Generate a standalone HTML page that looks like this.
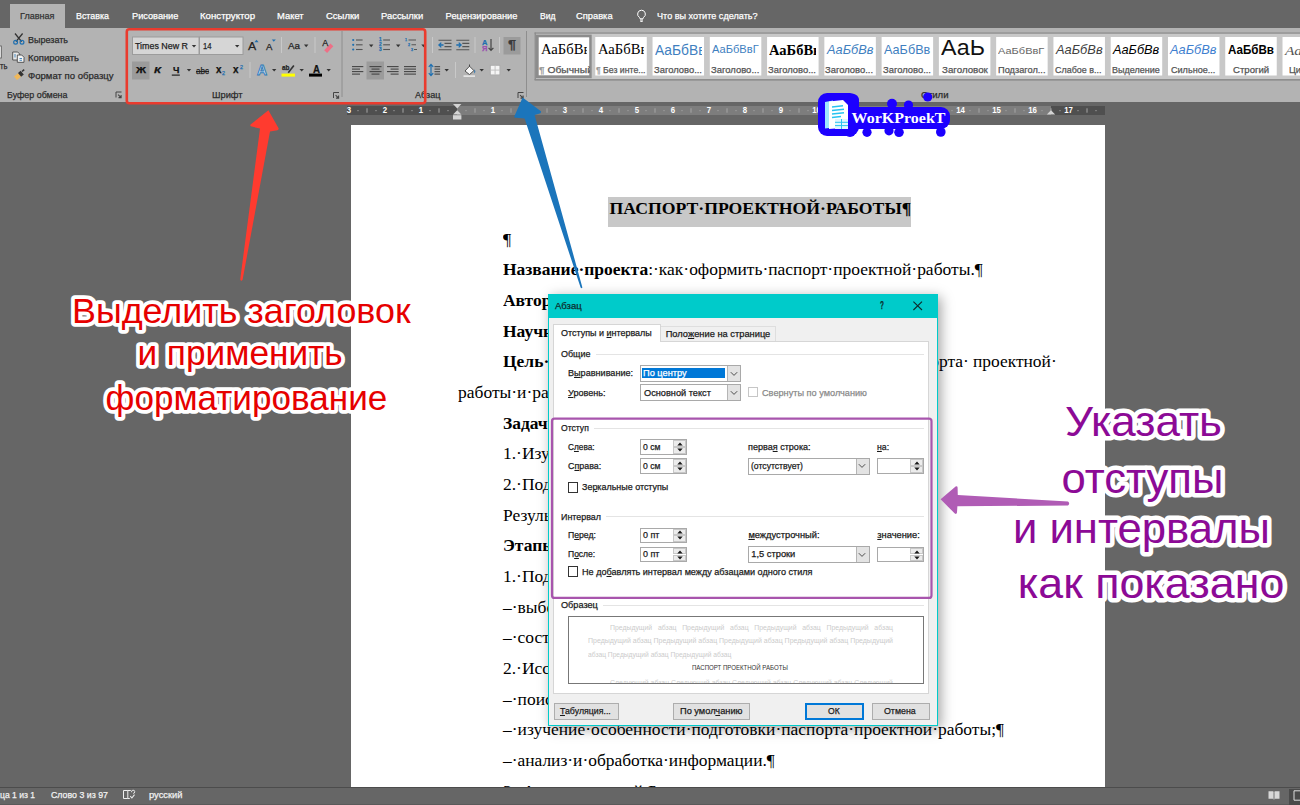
<!DOCTYPE html><html lang="ru"><head><meta charset="utf-8"><title>Абзац</title><style>
html,body{margin:0;padding:0}
body{width:1300px;height:805px;overflow:hidden;background:#666;position:relative}
.L{position:absolute;left:0;top:0;width:1300px;height:805px;overflow:hidden}
.L div,.L svg{position:absolute}
.t{position:absolute;white-space:pre;transform-origin:0 50%}
u{text-decoration:underline;text-underline-offset:1px}
#top .t,#dialog .t,#status .t{-webkit-text-stroke:0.25px currentColor}</style></head><body>
<div class="L" id="top" style="">
<div style="left:0px;top:0px;width:1300px;height:28px;background:#666666"></div>
<div style="left:10.3px;top:3.8px;width:54.9px;height:24.2px;background:#b3b3b3"></div>
<div style="left:0px;top:27.7px;width:1300px;height:74.1px;background:#b3b3b3"></div>
<svg style="left:635px;top:9px" width="13" height="14" viewBox="0 0 13 14"><path d="M6.5 1.2a3.9 3.9 0 0 0-2.2 7.1c.5.4.7.9.7 1.5h3c0-.6.2-1.1.7-1.5A3.9 3.9 0 0 0 6.5 1.2z" fill="none" stroke="#fff" stroke-width="1"/><path d="M5 11h3M5.3 12.4h2.4" stroke="#fff" stroke-width="1" fill="none"/></svg>
<svg style="left:0;top:0" width="1300" height="120" viewBox="0 0 1300 120"><rect x="-2" y="46" width="3.3" height="12" fill="#e8e8e8" stroke="#555" stroke-width="0.8"/><path d="M15 33.5l6.6 8.2M22.6 33.5l-6.6 8.2" stroke="#333" stroke-width="1.3" fill="none"/><circle cx="15.6" cy="42.3" r="1.9" fill="none" stroke="#1e6fb0" stroke-width="1.2"/><circle cx="22" cy="42.3" r="1.9" fill="none" stroke="#1e6fb0" stroke-width="1.2"/><path d="M12.7 52h5l2 2v6h-7z" fill="#e9e9e9" stroke="#4a4a4a" stroke-width="0.9"/><path d="M17.3 55h4.4l2.3 2.3v5h-6.7z" fill="#f4f4f4" stroke="#4a4a4a" stroke-width="0.9"/><path d="M15 54v3.5M19.5 58.5h2.5M19.5 60.3h2.5" stroke="#1e6fb0" stroke-width="0.8"/><path d="M14 76.5l4-3.3 3 3.6-4 3.2z" fill="#f0b85a"/><path d="M18 73l2.6-2.2 3.2 3.8-2.7 2.2z" fill="#333"/><path d="M22 71.5l2.2-1.8" stroke="#333" stroke-width="1.6"/><path d="M116 97.5v-5.5h5.5" fill="none" stroke="#444" stroke-width="1"/><path d="M118.1 94.6l3 3m0-2.6v2.6h-2.6" fill="none" stroke="#444" stroke-width="1.1"/><rect x="132.5" y="37" width="66.5" height="17.5" fill="#d6d6d6" stroke="#9c9c9c" stroke-width="1"/><rect x="199.5" y="37" width="43.5" height="17.5" fill="#d6d6d6" stroke="#9c9c9c" stroke-width="1"/><path d="M191.8 45h4.4l-2.2 2.6z" fill="#333"/><path d="M235 45h4.4l-2.2 2.6z" fill="#333"/><rect x="132" y="61.5" width="17.5" height="18" fill="#9b9b9b"/><path d="M186.8 69h4.4l-2.2 2.6z" fill="#333"/><path d="M171.8 75.1h8" stroke="#111" stroke-width="1.1"/><path d="M254.4 42.2h4.2l-2.1-2.4z" fill="#1e6fb0"/><path d="M271.8 39.4h4l-2 2.3z" fill="#1e6fb0"/><path d="M281.5 37V53" stroke="#c9c9c9" stroke-width="1"/><path d="M304 44.6h4.4l-2.2 2.6z" fill="#333"/><path d="M315 37V53" stroke="#c9c9c9" stroke-width="1"/><path d="M324.2 50.2l6.2-6.6 2.9 2.7-6.2 6.6z" fill="#ee6f86"/><path d="M250 62V78" stroke="#c9c9c9" stroke-width="1"/><path d="M272 69h4.4l-2.2 2.6z" fill="#333"/><path d="M287.6 72.2l5.6-7.2 1.3 1-5.6 7.2z" fill="#333"/><rect x="281.5" y="73.6" width="13.5" height="3" fill="#ffff00"/><path d="M299.5 69h4.4l-2.2 2.6z" fill="#333"/><rect x="309" y="73.6" width="13" height="3" fill="#000"/><path d="M326.5 69h4.4l-2.2 2.6z" fill="#333"/><path d="M333.5 98v-5.5h5.5" fill="none" stroke="#444" stroke-width="1"/><path d="M335.6 95.1l3 3m0-2.6v2.6h-2.6" fill="none" stroke="#444" stroke-width="1.1"/><path d="M342 31V97" stroke="#8e8e8e" stroke-width="1"/><circle cx="353.2" cy="40" r="1.1" fill="#1e6fb0"/><path d="M356 40h6.6" stroke="#555" stroke-width="1.1"/><path d="M383.2 40h6.8" stroke="#555" stroke-width="1.1"/><circle cx="353.2" cy="44.8" r="1.1" fill="#1e6fb0"/><path d="M356 44.8h6.6" stroke="#555" stroke-width="1.1"/><path d="M383.2 44.8h6.8" stroke="#555" stroke-width="1.1"/><circle cx="353.2" cy="49.5" r="1.1" fill="#1e6fb0"/><path d="M356 49.5h6.6" stroke="#555" stroke-width="1.1"/><path d="M383.2 49.5h6.8" stroke="#555" stroke-width="1.1"/><path d="M369 44.6h4.4l-2.2 2.6z" fill="#333"/><path d="M396 44.6h4.4l-2.2 2.6z" fill="#333"/><path d="M408.5 40h7.5M411.5 44.8h4.5M414 49.5h3" stroke="#555" stroke-width="1.1"/><path d="M421.3 44.6h4.4l-2.2 2.6z" fill="#333"/><rect x="366.5" y="61.5" width="17.5" height="18" fill="#9b9b9b"/><path d="M352 66.6H363.3" stroke="#444" stroke-width="1.1"/><path d="M352 69.1H360" stroke="#444" stroke-width="1.1"/><path d="M352 71.6H363.3" stroke="#444" stroke-width="1.1"/><path d="M352 74.1H360" stroke="#444" stroke-width="1.1"/><path d="M369.5 66.6H381.5" stroke="#444" stroke-width="1.1"/><path d="M371.5 69.1H379.5" stroke="#444" stroke-width="1.1"/><path d="M369.5 71.6H381.5" stroke="#444" stroke-width="1.1"/><path d="M371.5 74.1H379.5" stroke="#444" stroke-width="1.1"/><path d="M387 66.6H398.6" stroke="#444" stroke-width="1.1"/><path d="M390.6 69.1H398.6" stroke="#444" stroke-width="1.1"/><path d="M387 71.6H398.6" stroke="#444" stroke-width="1.1"/><path d="M390.6 74.1H398.6" stroke="#444" stroke-width="1.1"/><path d="M404 66.6H416" stroke="#444" stroke-width="1.1"/><path d="M404 69.1H416" stroke="#444" stroke-width="1.1"/><path d="M404 71.6H416" stroke="#444" stroke-width="1.1"/><path d="M404 74.1H416" stroke="#444" stroke-width="1.1"/><path d="M432.5 37V53" stroke="#c9c9c9" stroke-width="1"/><path d="M438.5 40.2h13M438.5 49.8h13M444.5 43.4h7M444.5 46.6h7" stroke="#555" stroke-width="1.1"/><path d="M438.9 45h4.6M441.3 42.6l-2.4 2.4 2.4 2.4" stroke="#1e6fb0" stroke-width="1.3" fill="none"/><path d="M456.3 40.2h13M456.3 49.8h13M462.3 43.4h7M462.3 46.6h7" stroke="#555" stroke-width="1.1"/><path d="M456.3 45h4.6M458.7 42.6l2.4 2.4-2.4 2.4" stroke="#1e6fb0" stroke-width="1.3" fill="none"/><path d="M475 37V53" stroke="#c9c9c9" stroke-width="1"/><path d="M491 39v11M488.6 47.8l2.4 2.6 2.4-2.6" stroke="#444" stroke-width="1.2" fill="none"/><path d="M499.5 37V53" stroke="#c9c9c9" stroke-width="1"/><rect x="503.5" y="37" width="17" height="17.5" fill="#9b9b9b"/><path d="M431 64.5v11M428.8 66.8l2.2-2.4 2.2 2.4M428.8 73.2l2.2 2.4 2.2-2.4" stroke="#1e6fb0" stroke-width="1.2" fill="none"/><path d="M434.5 66.6h5.6M434.5 69.1h5.6M434.5 71.6h5.6M434.5 74.1h5.6" stroke="#555" stroke-width="1.1"/><path d="M444.5 69h4.4l-2.2 2.6z" fill="#333"/><path d="M455.5 62V78" stroke="#c9c9c9" stroke-width="1"/><path d="M465 71l4.5-4.8 4.4 4.4-4.4 4z" fill="#f6f6f6" stroke="#444" stroke-width="0.9"/><path d="M469.5 66.5v-2" stroke="#444" stroke-width="1"/><path d="M474.3 69.3c1.4 1.6 1.4 3.2 0 4.2z" fill="#1e6fb0"/><rect x="463.5" y="75.3" width="11.5" height="1.6" fill="#e9e9e9"/><path d="M479.5 69h4.4l-2.2 2.6z" fill="#333"/><rect x="490.3" y="65.3" width="9.6" height="9.6" fill="#f5f5f5" stroke="#aaa" stroke-width="0.8"/><path d="M495.1 65.3v9.6M490.3 70.1h9.6" stroke="#bdbdbd" stroke-width="0.9"/><path d="M506.5 69h4.4l-2.2 2.6z" fill="#333"/><path d="M518 98v-5.5h5.5" fill="none" stroke="#444" stroke-width="1"/><path d="M520.1 95.1l3 3m0-2.6v2.6h-2.6" fill="none" stroke="#444" stroke-width="1.1"/><path d="M526.5 31V97" stroke="#8e8e8e" stroke-width="1"/><rect x="534.5" y="32" width="770" height="48.5" fill="#c8c8c8"/><path d="M534.5 33H1300M534.5 79.8H1300" stroke="#8e8e8e" stroke-width="1.7"/><path d="M535.2 32.5v47.5" stroke="#8e8e8e" stroke-width="1.5"/><rect x="536" y="34.6" width="55.7" height="43.6" fill="#8c8c8c"/><rect x="538.7" y="37.3" width="50.5" height="38" fill="#fff"/><rect x="595.27" y="37" width="51.5" height="38.5" fill="#fff"/><rect x="652.54" y="37" width="51.5" height="38.5" fill="#fff"/><rect x="709.81" y="37" width="51.5" height="38.5" fill="#fff"/><rect x="767.08" y="37" width="51.5" height="38.5" fill="#fff"/><rect x="824.35" y="37" width="51.5" height="38.5" fill="#fff"/><rect x="881.62" y="37" width="51.5" height="38.5" fill="#fff"/><rect x="938.89" y="37" width="51.5" height="38.5" fill="#fff"/><rect x="996.16" y="37" width="51.5" height="38.5" fill="#fff"/><rect x="1053.43" y="37" width="51.5" height="38.5" fill="#fff"/><rect x="1110.70" y="37" width="51.5" height="38.5" fill="#fff"/><rect x="1167.97" y="37" width="51.5" height="38.5" fill="#fff"/><rect x="1225.24" y="37" width="51.5" height="38.5" fill="#fff"/><rect x="1282.51" y="37" width="51.5" height="38.5" fill="#fff"/></svg>
<span class="t" style="left:20.00px;top:11.72px;font:400 9.3px/1 'Liberation Sans',sans-serif;color:#333;transform:scaleX(0.9748);">Главная</span>
<span class="t" style="left:76.40px;top:11.72px;font:400 9.3px/1 'Liberation Sans',sans-serif;color:#ffffff;transform:scaleX(0.9548);">Вставка</span>
<span class="t" style="left:131.60px;top:11.72px;font:400 9.3px/1 'Liberation Sans',sans-serif;color:#ffffff;transform:scaleX(0.9909);">Рисование</span>
<span class="t" style="left:200.00px;top:11.72px;font:400 9.3px/1 'Liberation Sans',sans-serif;color:#ffffff;transform:scaleX(1.0374);">Конструктор</span>
<span class="t" style="left:277.00px;top:11.72px;font:400 9.3px/1 'Liberation Sans',sans-serif;color:#ffffff;transform:scaleX(1.0109);">Макет</span>
<span class="t" style="left:325.60px;top:11.72px;font:400 9.3px/1 'Liberation Sans',sans-serif;color:#ffffff;transform:scaleX(1.0203);">Ссылки</span>
<span class="t" style="left:381.40px;top:11.72px;font:400 9.3px/1 'Liberation Sans',sans-serif;color:#ffffff;transform:scaleX(1.0112);">Рассылки</span>
<span class="t" style="left:445.60px;top:11.72px;font:400 9.3px/1 'Liberation Sans',sans-serif;color:#ffffff;">Рецензирование</span>
<span class="t" style="left:539.60px;top:11.72px;font:400 9.3px/1 'Liberation Sans',sans-serif;color:#ffffff;transform:scaleX(0.9151);">Вид</span>
<span class="t" style="left:576.40px;top:11.72px;font:400 9.3px/1 'Liberation Sans',sans-serif;color:#ffffff;transform:scaleX(1.0032);">Справка</span>
<span class="t" style="left:657.40px;top:11.72px;font:400 9.3px/1 'Liberation Sans',sans-serif;color:#ffffff;transform:scaleX(0.9788);">Что вы хотите сделать?</span>
<span class="t" style="left:28.00px;top:35.52px;font:400 9.3px/1 'Liberation Sans',sans-serif;color:#2b2b2b;transform:scaleX(0.9671);">Вырезать</span>
<span class="t" style="left:28.00px;top:53.92px;font:400 9.3px/1 'Liberation Sans',sans-serif;color:#2b2b2b;transform:scaleX(1.0187);">Копировать</span>
<span class="t" style="left:28.00px;top:71.92px;font:400 9.3px/1 'Liberation Sans',sans-serif;color:#2b2b2b;transform:scaleX(1.0255);">Формат по образцу</span>
<span class="t" style="left:6.50px;top:91.01px;font:400 9.2px/1 'Liberation Sans',sans-serif;color:#2b2b2b;transform:scaleX(0.9690);">Буфер обмена</span>
<span class="t" style="left:0.00px;top:62.22px;font:400 9.3px/1 'Liberation Sans',sans-serif;color:#2b2b2b;transform:scaleX(0.8233);">ть</span>
<span class="t" style="left:212.00px;top:91.01px;font:400 9.2px/1 'Liberation Sans',sans-serif;color:#2b2b2b;transform:scaleX(1.0088);">Шрифт</span>
<span class="t" style="left:415.00px;top:91.01px;font:400 9.2px/1 'Liberation Sans',sans-serif;color:#2b2b2b;transform:scaleX(0.9891);">Абзац</span>
<span class="t" style="left:921.00px;top:90.81px;font:400 9.2px/1 'Liberation Sans',sans-serif;color:#2b2b2b;transform:scaleX(1.0390);">Стили</span>
<span class="t" style="left:135.00px;top:41.72px;font:400 9.3px/1 'Liberation Sans',sans-serif;color:#222;transform:scaleX(0.9558);">Times New R</span>
<span class="t" style="left:203.00px;top:41.72px;font:400 9.3px/1 'Liberation Sans',sans-serif;color:#222;transform:scaleX(0.8218);">14</span>
<span class="t" style="left:136.00px;top:65.44px;font:700 9.4px/1 'Liberation Sans',sans-serif;color:#111;transform:scaleX(1.1786);">Ж</span>
<span class="t" style="left:154.00px;top:65.44px;font:italic 700 9.4px/1 'Liberation Sans',sans-serif;color:#111;transform:scaleX(1.2141);">К</span>
<span class="t" style="left:172.60px;top:65.44px;font:700 9.4px/1 'Liberation Sans',sans-serif;color:#111;transform:scaleX(0.9706);">Ч</span>
<span class="t" style="left:196.00px;top:65.55px;font:400 9.5px/1 'Liberation Sans',sans-serif;color:#222;text-decoration:line-through;transform:scaleX(0.8481);">abc</span>
<span class="t" style="left:215.50px;top:64.93px;font:700 10px/1 'Liberation Sans',sans-serif;color:#111;transform:scaleX(0.9888);">x</span>
<span class="t" style="left:222.00px;top:71.36px;font:400 5px/1 'Liberation Sans',sans-serif;color:#1e6fb0;transform:scaleX(1.0787);">2</span>
<span class="t" style="left:233.00px;top:64.93px;font:700 10px/1 'Liberation Sans',sans-serif;color:#111;transform:scaleX(0.9888);">x</span>
<span class="t" style="left:239.50px;top:65.36px;font:400 5px/1 'Liberation Sans',sans-serif;color:#1e6fb0;transform:scaleX(1.0787);">2</span>
<span class="t" style="left:247.80px;top:40.71px;font:400 11.2px/1 'Liberation Sans',sans-serif;color:#222;transform:scaleX(1.0979);">A</span>
<span class="t" style="left:266.30px;top:42.98px;font:400 9px/1 'Liberation Sans',sans-serif;color:#222;transform:scaleX(1.0639);">A</span>
<span class="t" style="left:288.00px;top:40.50px;font:400 9.8px/1 'Liberation Sans',sans-serif;color:#222;">Aa</span>
<span class="t" style="left:322.30px;top:39.18px;font:400 9px/1 'Liberation Sans',sans-serif;color:#222;">A</span>
<span class="t" style="left:257.40px;top:63.32px;font:700 14.5px/1 'Liberation Sans',sans-serif;color:#d7e6f3;-webkit-text-stroke:1px #2f7ab8;transform:scaleX(0.9538);">A</span>
<span class="t" style="left:282.00px;top:64.32px;font:700 8px/1 'Liberation Sans',sans-serif;color:#222;transform:scaleX(0.8027);">ab</span>
<span class="t" style="left:312.60px;top:63.86px;font:700 11.5px/1 'Liberation Sans',sans-serif;color:#111;transform:scaleX(0.8421);">A</span>
<span class="t" style="left:379.00px;top:38.30px;font:700 4.6px/1 'Liberation Sans',sans-serif;color:#1e6fb0;transform:scaleX(1.0146);">1</span>
<span class="t" style="left:379.00px;top:43.00px;font:700 4.6px/1 'Liberation Sans',sans-serif;color:#1e6fb0;transform:scaleX(1.0146);">2</span>
<span class="t" style="left:379.00px;top:47.70px;font:700 4.6px/1 'Liberation Sans',sans-serif;color:#1e6fb0;transform:scaleX(1.0146);">3</span>
<span class="t" style="left:405.00px;top:38.47px;font:700 4.4px/1 'Liberation Sans',sans-serif;color:#1e6fb0;transform:scaleX(0.8153);">1</span>
<span class="t" style="left:408.00px;top:43.17px;font:700 4.4px/1 'Liberation Sans',sans-serif;color:#1e6fb0;transform:scaleX(0.8153);">2</span>
<span class="t" style="left:411.00px;top:47.87px;font:700 4.4px/1 'Liberation Sans',sans-serif;color:#1e6fb0;transform:scaleX(0.8153);">3</span>
<span class="t" style="left:482.00px;top:38.56px;font:700 7.6px/1 'Liberation Sans',sans-serif;color:#1e6fb0;transform:scaleX(0.9846);">A</span>
<span class="t" style="left:482.00px;top:45.36px;font:700 7.6px/1 'Liberation Sans',sans-serif;color:#9a4fb0;transform:scaleX(0.9874);">Я</span>
<span class="t" style="left:508.00px;top:38.84px;font:700 12px/1 'Liberation Sans',sans-serif;color:#3a3a3a;transform:scaleX(1.1963);">¶</span>
<div style="left:538px;top:37px;width:49.2px;height:38.5px;overflow:hidden"><span class="t" style="left:2.80px;top:4.80px;font:400 14.8px/1 'Liberation Serif',serif;color:#000;-webkit-text-stroke:0;transform:scaleX(0.9889);">АаБбВв</span></div>
<div style="left:538px;top:37px;width:51.5px;height:38.5px;overflow:hidden"><span class="t" style="left:0.60px;top:29.18px;font:400 9px/1 'Liberation Sans',sans-serif;color:#555;transform:scaleX(1.1438);"><span style="color:#999">¶</span> Обычный</span></div>
<div style="left:595.27px;top:37px;width:49.2px;height:38.5px;overflow:hidden"><span class="t" style="left:2.83px;top:4.80px;font:400 14.8px/1 'Liberation Serif',serif;color:#000;-webkit-text-stroke:0;transform:scaleX(0.9889);">АаБбВв</span></div>
<div style="left:595.27px;top:37px;width:51.5px;height:38.5px;overflow:hidden"><span class="t" style="left:0.93px;top:29.18px;font:400 9px/1 'Liberation Sans',sans-serif;color:#555;transform:scaleX(0.9664);"><span style="color:#999">¶</span> Без инте...</span></div>
<div style="left:652.54px;top:37px;width:49.2px;height:38.5px;overflow:hidden"><span class="t" style="left:2.46px;top:5.75px;font:400 14.7px/1 'Liberation Sans',sans-serif;color:#3f7fbf;-webkit-text-stroke:0;transform:scaleX(0.9408);">АаБбВв</span></div>
<div style="left:652.54px;top:37px;width:51.5px;height:38.5px;overflow:hidden"><span class="t" style="left:1.16px;top:29.18px;font:400 9px/1 'Liberation Sans',sans-serif;color:#555;transform:scaleX(1.0460);">Заголово...</span></div>
<div style="left:709.81px;top:37px;width:49.2px;height:38.5px;overflow:hidden"><span class="t" style="left:2.39px;top:7.06px;font:400 11.5px/1 'Liberation Sans',sans-serif;color:#3f7fbf;-webkit-text-stroke:0;transform:scaleX(0.9660);">АаБбВвГ</span></div>
<div style="left:709.81px;top:37px;width:51.5px;height:38.5px;overflow:hidden"><span class="t" style="left:1.19px;top:29.18px;font:400 9px/1 'Liberation Sans',sans-serif;color:#555;transform:scaleX(1.0525);">Заголово...</span></div>
<div style="left:767.08px;top:37px;width:49.2px;height:38.5px;overflow:hidden"><span class="t" style="left:2.42px;top:5.67px;font:700 14.6px/1 'Liberation Serif',serif;color:#000;-webkit-text-stroke:0;transform:scaleX(0.9939);">АаБбВв</span></div>
<div style="left:767.08px;top:37px;width:51.5px;height:38.5px;overflow:hidden"><span class="t" style="left:0.92px;top:29.18px;font:400 9px/1 'Liberation Sans',sans-serif;color:#555;transform:scaleX(1.0460);">Заголово...</span></div>
<div style="left:824.35px;top:37px;width:49.2px;height:38.5px;overflow:hidden"><span class="t" style="left:2.35px;top:7.25px;font:italic 400 12.1px/1 'Liberation Sans',sans-serif;color:#3f7fbf;-webkit-text-stroke:0;transform:scaleX(1.0579);">АаБбВв</span></div>
<div style="left:824.35px;top:37px;width:51.5px;height:38.5px;overflow:hidden"><span class="t" style="left:0.95px;top:29.18px;font:400 9px/1 'Liberation Sans',sans-serif;color:#555;transform:scaleX(1.0481);">Заголово...</span></div>
<div style="left:881.62px;top:37px;width:49.2px;height:38.5px;overflow:hidden"><span class="t" style="left:2.28px;top:7.25px;font:400 12.1px/1 'Liberation Sans',sans-serif;color:#3f7fbf;-webkit-text-stroke:0;transform:scaleX(1.0452);">АаБбВв</span></div>
<div style="left:881.62px;top:37px;width:51.5px;height:38.5px;overflow:hidden"><span class="t" style="left:1.08px;top:29.18px;font:400 9px/1 'Liberation Sans',sans-serif;color:#555;transform:scaleX(1.0460);">Заголово...</span></div>
<div style="left:938.89px;top:37px;width:49.2px;height:38.5px;overflow:hidden"><span class="t" style="left:2.41px;top:-0.43px;font:400 22px/1 'Liberation Sans',sans-serif;color:#111;-webkit-text-stroke:0;transform:scaleX(1.0554);">АаЬ</span></div>
<div style="left:938.89px;top:37px;width:51.5px;height:38.5px;overflow:hidden"><span class="t" style="left:2.71px;top:29.18px;font:400 9px/1 'Liberation Sans',sans-serif;color:#555;transform:scaleX(1.0844);">Заголовок</span></div>
<div style="left:996.16px;top:37px;width:49.2px;height:38.5px;overflow:hidden"><span class="t" style="left:2.34px;top:9.65px;font:400 8.8px/1 'Liberation Sans',sans-serif;color:#666;-webkit-text-stroke:0;transform:scaleX(1.2519);">АаБбВвГ</span></div>
<div style="left:996.16px;top:37px;width:51.5px;height:38.5px;overflow:hidden"><span class="t" style="left:1.54px;top:29.18px;font:400 9px/1 'Liberation Sans',sans-serif;color:#555;transform:scaleX(1.0256);">Подзагол...</span></div>
<div style="left:1053.43px;top:37px;width:49.2px;height:38.5px;overflow:hidden"><span class="t" style="left:2.27px;top:7.25px;font:italic 400 12.1px/1 'Liberation Sans',sans-serif;color:#404040;-webkit-text-stroke:0;transform:scaleX(1.0625);">АаБбВв</span></div>
<div style="left:1053.43px;top:37px;width:51.5px;height:38.5px;overflow:hidden"><span class="t" style="left:1.77px;top:29.18px;font:400 9px/1 'Liberation Sans',sans-serif;color:#555;transform:scaleX(0.9932);">Слабое в...</span></div>
<div style="left:1110.7px;top:37px;width:49.2px;height:38.5px;overflow:hidden"><span class="t" style="left:2.40px;top:7.25px;font:italic 400 12.1px/1 'Liberation Sans',sans-serif;color:#000;-webkit-text-stroke:0;transform:scaleX(1.0556);">АаБбВв</span></div>
<div style="left:1110.7px;top:37px;width:51.5px;height:38.5px;overflow:hidden"><span class="t" style="left:1.30px;top:29.18px;font:400 9px/1 'Liberation Sans',sans-serif;color:#555;">Выделение</span></div>
<div style="left:1167.97px;top:37px;width:49.2px;height:38.5px;overflow:hidden"><span class="t" style="left:2.53px;top:7.25px;font:italic 400 12.1px/1 'Liberation Sans',sans-serif;color:#3f7fd0;-webkit-text-stroke:0;transform:scaleX(1.0602);">АаБбВв</span></div>
<div style="left:1167.97px;top:37px;width:51.5px;height:38.5px;overflow:hidden"><span class="t" style="left:2.93px;top:29.18px;font:400 9px/1 'Liberation Sans',sans-serif;color:#555;transform:scaleX(1.0079);">Сильное...</span></div>
<div style="left:1225.24px;top:37px;width:49.2px;height:38.5px;overflow:hidden"><span class="t" style="left:2.36px;top:7.05px;font:700 12.1px/1 'Liberation Sans',sans-serif;color:#000;-webkit-text-stroke:0;transform:scaleX(0.9593);">АаБбВв</span></div>
<div style="left:1225.24px;top:37px;width:51.5px;height:38.5px;overflow:hidden"><span class="t" style="left:7.56px;top:29.18px;font:400 9px/1 'Liberation Sans',sans-serif;color:#555;transform:scaleX(1.0652);">Строгий</span></div>
<div style="left:1282.51px;top:37px;width:49.2px;height:38.5px;overflow:hidden"><span class="t" style="left:2.59px;top:6.61px;font:italic 400 13px/1 'Liberation Serif',serif;color:#555;-webkit-text-stroke:0;transform:scaleX(1.1891);">АаБбВв</span></div>
<div style="left:1282.51px;top:37px;width:51.5px;height:38.5px;overflow:hidden"><span class="t" style="left:6.49px;top:29.18px;font:400 9px/1 'Liberation Sans',sans-serif;color:#555;transform:scaleX(1.0257);">Цитата 2</span></div>
</div>
<div class="L" id="ruler" style="">
<div style="left:347px;top:105.5px;width:757.5px;height:9.1px;background:#4f4f4f"></div>
<div style="left:457px;top:105.5px;width:594px;height:9.1px;background:#7d7d7d"></div>
<svg style="left:0;top:0" width="1300" height="125" viewBox="0 0 1300 125"><path d="M367 108.3v4.4" stroke="#a6a6a6" stroke-width="1"/><rect x="357.5" y="110" width="1" height="1.2" fill="#a6a6a6"/><rect x="375.5" y="110" width="1" height="1.2" fill="#a6a6a6"/><path d="M403 108.3v4.4" stroke="#a6a6a6" stroke-width="1"/><rect x="393.5" y="110" width="1" height="1.2" fill="#a6a6a6"/><rect x="411.5" y="110" width="1" height="1.2" fill="#a6a6a6"/><path d="M439 108.3v4.4" stroke="#a6a6a6" stroke-width="1"/><rect x="429.5" y="110" width="1" height="1.2" fill="#a6a6a6"/><rect x="447.5" y="110" width="1" height="1.2" fill="#a6a6a6"/><path d="M475 108.3v4.4" stroke="#a6a6a6" stroke-width="1"/><rect x="465.5" y="110" width="1" height="1.2" fill="#a6a6a6"/><rect x="483.5" y="110" width="1" height="1.2" fill="#a6a6a6"/><path d="M511 108.3v4.4" stroke="#a6a6a6" stroke-width="1"/><rect x="501.5" y="110" width="1" height="1.2" fill="#a6a6a6"/><rect x="519.5" y="110" width="1" height="1.2" fill="#a6a6a6"/><path d="M547 108.3v4.4" stroke="#a6a6a6" stroke-width="1"/><rect x="537.5" y="110" width="1" height="1.2" fill="#a6a6a6"/><rect x="555.5" y="110" width="1" height="1.2" fill="#a6a6a6"/><path d="M583 108.3v4.4" stroke="#a6a6a6" stroke-width="1"/><rect x="573.5" y="110" width="1" height="1.2" fill="#a6a6a6"/><rect x="591.5" y="110" width="1" height="1.2" fill="#a6a6a6"/><path d="M619 108.3v4.4" stroke="#a6a6a6" stroke-width="1"/><rect x="609.5" y="110" width="1" height="1.2" fill="#a6a6a6"/><rect x="627.5" y="110" width="1" height="1.2" fill="#a6a6a6"/><path d="M655 108.3v4.4" stroke="#a6a6a6" stroke-width="1"/><rect x="645.5" y="110" width="1" height="1.2" fill="#a6a6a6"/><rect x="663.5" y="110" width="1" height="1.2" fill="#a6a6a6"/><path d="M691 108.3v4.4" stroke="#a6a6a6" stroke-width="1"/><rect x="681.5" y="110" width="1" height="1.2" fill="#a6a6a6"/><rect x="699.5" y="110" width="1" height="1.2" fill="#a6a6a6"/><path d="M727 108.3v4.4" stroke="#a6a6a6" stroke-width="1"/><rect x="717.5" y="110" width="1" height="1.2" fill="#a6a6a6"/><rect x="735.5" y="110" width="1" height="1.2" fill="#a6a6a6"/><path d="M763 108.3v4.4" stroke="#a6a6a6" stroke-width="1"/><rect x="753.5" y="110" width="1" height="1.2" fill="#a6a6a6"/><rect x="771.5" y="110" width="1" height="1.2" fill="#a6a6a6"/><path d="M799 108.3v4.4" stroke="#a6a6a6" stroke-width="1"/><rect x="789.5" y="110" width="1" height="1.2" fill="#a6a6a6"/><rect x="807.5" y="110" width="1" height="1.2" fill="#a6a6a6"/><path d="M835 108.3v4.4" stroke="#a6a6a6" stroke-width="1"/><rect x="825.5" y="110" width="1" height="1.2" fill="#a6a6a6"/><rect x="843.5" y="110" width="1" height="1.2" fill="#a6a6a6"/><path d="M871 108.3v4.4" stroke="#a6a6a6" stroke-width="1"/><rect x="861.5" y="110" width="1" height="1.2" fill="#a6a6a6"/><rect x="879.5" y="110" width="1" height="1.2" fill="#a6a6a6"/><path d="M907 108.3v4.4" stroke="#a6a6a6" stroke-width="1"/><rect x="897.5" y="110" width="1" height="1.2" fill="#a6a6a6"/><rect x="915.5" y="110" width="1" height="1.2" fill="#a6a6a6"/><path d="M943 108.3v4.4" stroke="#a6a6a6" stroke-width="1"/><rect x="933.5" y="110" width="1" height="1.2" fill="#a6a6a6"/><rect x="951.5" y="110" width="1" height="1.2" fill="#a6a6a6"/><path d="M979 108.3v4.4" stroke="#a6a6a6" stroke-width="1"/><rect x="969.5" y="110" width="1" height="1.2" fill="#a6a6a6"/><rect x="987.5" y="110" width="1" height="1.2" fill="#a6a6a6"/><path d="M1015 108.3v4.4" stroke="#a6a6a6" stroke-width="1"/><rect x="1005.5" y="110" width="1" height="1.2" fill="#a6a6a6"/><rect x="1023.5" y="110" width="1" height="1.2" fill="#a6a6a6"/><path d="M1051 108.3v4.4" stroke="#a6a6a6" stroke-width="1"/><rect x="1041.5" y="110" width="1" height="1.2" fill="#a6a6a6"/><rect x="1059.5" y="110" width="1" height="1.2" fill="#a6a6a6"/><path d="M1087 108.3v4.4" stroke="#a6a6a6" stroke-width="1"/><rect x="1077.5" y="110" width="1" height="1.2" fill="#a6a6a6"/><rect x="1095.5" y="110" width="1" height="1.2" fill="#a6a6a6"/><path d="M453 104h8.4l-4.2 4.4z" fill="#d4d4d4"/><path d="M453 114.6h8.4l-4.2-4.4z" fill="#d4d4d4"/><rect x="453" y="115.2" width="8.4" height="4.3" fill="#d4d4d4"/><path d="M1046.8 114.6h8.4l-4.2-4.4z" fill="#d4d4d4"/></svg>
<span class="t" style="left:349.00px;top:106.20px;font:700 8.5px/1 'Liberation Sans',sans-serif;color:#fff;transform:translateX(-50%) scaleX(0.92);">3</span>
<span class="t" style="left:385.00px;top:106.20px;font:700 8.5px/1 'Liberation Sans',sans-serif;color:#fff;transform:translateX(-50%) scaleX(0.92);">2</span>
<span class="t" style="left:421.00px;top:106.20px;font:700 8.5px/1 'Liberation Sans',sans-serif;color:#fff;transform:translateX(-50%) scaleX(0.92);">1</span>
<span class="t" style="left:493.00px;top:106.20px;font:700 8.5px/1 'Liberation Sans',sans-serif;color:#fff;transform:translateX(-50%) scaleX(0.92);">1</span>
<span class="t" style="left:529.00px;top:106.20px;font:700 8.5px/1 'Liberation Sans',sans-serif;color:#fff;transform:translateX(-50%) scaleX(0.92);">2</span>
<span class="t" style="left:565.00px;top:106.20px;font:700 8.5px/1 'Liberation Sans',sans-serif;color:#fff;transform:translateX(-50%) scaleX(0.92);">3</span>
<span class="t" style="left:601.00px;top:106.20px;font:700 8.5px/1 'Liberation Sans',sans-serif;color:#fff;transform:translateX(-50%) scaleX(0.92);">4</span>
<span class="t" style="left:637.00px;top:106.20px;font:700 8.5px/1 'Liberation Sans',sans-serif;color:#fff;transform:translateX(-50%) scaleX(0.92);">5</span>
<span class="t" style="left:673.00px;top:106.20px;font:700 8.5px/1 'Liberation Sans',sans-serif;color:#fff;transform:translateX(-50%) scaleX(0.92);">6</span>
<span class="t" style="left:709.00px;top:106.20px;font:700 8.5px/1 'Liberation Sans',sans-serif;color:#fff;transform:translateX(-50%) scaleX(0.92);">7</span>
<span class="t" style="left:745.00px;top:106.20px;font:700 8.5px/1 'Liberation Sans',sans-serif;color:#fff;transform:translateX(-50%) scaleX(0.92);">8</span>
<span class="t" style="left:781.00px;top:106.20px;font:700 8.5px/1 'Liberation Sans',sans-serif;color:#fff;transform:translateX(-50%) scaleX(0.92);">9</span>
<span class="t" style="left:817.00px;top:106.20px;font:700 8.5px/1 'Liberation Sans',sans-serif;color:#fff;transform:translateX(-50%) scaleX(0.92);">10</span>
<span class="t" style="left:853.00px;top:106.20px;font:700 8.5px/1 'Liberation Sans',sans-serif;color:#fff;transform:translateX(-50%) scaleX(0.92);">11</span>
<span class="t" style="left:889.00px;top:106.20px;font:700 8.5px/1 'Liberation Sans',sans-serif;color:#fff;transform:translateX(-50%) scaleX(0.92);">12</span>
<span class="t" style="left:925.00px;top:106.20px;font:700 8.5px/1 'Liberation Sans',sans-serif;color:#fff;transform:translateX(-50%) scaleX(0.92);">13</span>
<span class="t" style="left:961.00px;top:106.20px;font:700 8.5px/1 'Liberation Sans',sans-serif;color:#fff;transform:translateX(-50%) scaleX(0.92);">14</span>
<span class="t" style="left:997.00px;top:106.20px;font:700 8.5px/1 'Liberation Sans',sans-serif;color:#fff;transform:translateX(-50%) scaleX(0.92);">15</span>
<span class="t" style="left:1033.00px;top:106.20px;font:700 8.5px/1 'Liberation Sans',sans-serif;color:#fff;transform:translateX(-50%) scaleX(0.92);">16</span>
<span class="t" style="left:1069.00px;top:106.20px;font:700 8.5px/1 'Liberation Sans',sans-serif;color:#fff;transform:translateX(-50%) scaleX(0.92);">17</span>
</div>
<div class="L" id="page" style="height:787px;">
<div style="left:350.5px;top:125.2px;width:754px;height:664.8px;background:#fff"></div>
<div style="left:607.5px;top:197px;width:303.8px;height:30px;background:#c8c8c8"></div>
<span class="t" style="left:609.50px;top:199.98px;font:700 17.7px/1 'Liberation Serif',serif;color:#000;">ПАСПОРТ·ПРОЕКТНОЙ·РАБОТЫ¶</span>
<span class="t" style="left:502.80px;top:230.64px;font:400 17.7px/1 'Liberation Serif',serif;color:#000;transform:scaleX(1.0230);">¶</span>
<span class="t" style="left:502.60px;top:261.30px;font:400 17.7px/1 'Liberation Serif',serif;color:#000;transform:scaleX(0.9881);"><b>Название·проекта</b>:·как·оформить·паспорт·проектной·работы.¶</span>
<span class="t" style="left:502.70px;top:291.96px;font:400 17.7px/1 'Liberation Serif',serif;color:#000;transform:scaleX(0.9880);"><b>Автор·проекта</b>:·Смирнова·Анна,·ученица·9·класса.¶</span>
<span class="t" style="left:502.70px;top:322.62px;font:400 17.7px/1 'Liberation Serif',serif;color:#000;transform:scaleX(0.9880);"><b>Научный·руководитель</b>:·Петрова·Ольга·Ивановна.¶</span>
<span class="t" style="left:502.70px;top:353.28px;font:400 17.7px/1 'Liberation Serif',serif;color:#000;transform:scaleX(0.9880);"><b>Цель·проекта</b>:·изучить·правила·оформления</span>
<span class="t" style="left:896.30px;top:353.28px;font:400 17.7px/1 'Liberation Serif',serif;color:#000;transform:scaleX(0.9880);">паспорта·</span>
<span class="t" style="left:972.70px;top:353.28px;font:400 17.7px/1 'Liberation Serif',serif;color:#000;transform:scaleX(0.9849);">проектной·</span>
<span class="t" style="left:457.80px;top:383.94px;font:400 17.7px/1 'Liberation Serif',serif;color:#000;transform:scaleX(0.9880);">работы·и·разработать·образец·паспорта·для·учащихся.¶</span>
<span class="t" style="left:502.70px;top:414.60px;font:400 17.7px/1 'Liberation Serif',serif;color:#000;transform:scaleX(0.9880);"><b>Задачи·проекта</b>:¶</span>
<span class="t" style="left:502.70px;top:445.26px;font:400 17.7px/1 'Liberation Serif',serif;color:#000;transform:scaleX(0.9880);">1.·Изучить·требования·к·паспорту·проектной·работы.¶</span>
<span class="t" style="left:502.70px;top:475.92px;font:400 17.7px/1 'Liberation Serif',serif;color:#000;transform:scaleX(0.9880);">2.·Подготовить·образец·паспорта·проекта.¶</span>
<span class="t" style="left:502.70px;top:506.58px;font:400 17.7px/1 'Liberation Serif',serif;color:#000;transform:scaleX(0.9880);">Результат·проекта:·готовый·образец·паспорта.¶</span>
<span class="t" style="left:502.70px;top:537.24px;font:400 17.7px/1 'Liberation Serif',serif;color:#000;transform:scaleX(0.9880);"><b>Этапы·работы·над·проектом</b>:¶</span>
<span class="t" style="left:502.70px;top:567.90px;font:400 17.7px/1 'Liberation Serif',serif;color:#000;transform:scaleX(0.9880);">1.·Подготовительный:¶</span>
<span class="t" style="left:502.70px;top:598.56px;font:400 17.7px/1 'Liberation Serif',serif;color:#000;transform:scaleX(0.9880);">–·выбор·темы·проекта;¶</span>
<span class="t" style="left:502.70px;top:629.22px;font:400 17.7px/1 'Liberation Serif',serif;color:#000;transform:scaleX(0.9880);">–·составление·плана·работы.¶</span>
<span class="t" style="left:502.70px;top:659.88px;font:400 17.7px/1 'Liberation Serif',serif;color:#000;transform:scaleX(0.9880);">2.·Исследовательский:¶</span>
<span class="t" style="left:502.70px;top:690.54px;font:400 17.7px/1 'Liberation Serif',serif;color:#000;transform:scaleX(0.9880);">–·поиск·информации·по·теме;¶</span>
<span class="t" style="left:503.30px;top:721.20px;font:400 17.7px/1 'Liberation Serif',serif;color:#000;transform:scaleX(0.9876);">–·изучение·особенности·подготовки·паспорта·проектной·работы;¶</span>
<span class="t" style="left:503.30px;top:751.86px;font:400 17.7px/1 'Liberation Serif',serif;color:#000;transform:scaleX(0.9841);">–·анализ·и·обработка·информации.¶</span>
<span class="t" style="left:503.30px;top:782.52px;font:400 17.7px/1 'Liberation Serif',serif;color:#000;transform:scaleX(1.0187);">3.·Аналитический.¶</span>
</div>
<div class="L" id="dlgshadow" style="">
<div style="left:548px;top:294px;width:389.5px;height:432px;box-shadow:3px 3px 12px 0 rgba(0,0,0,0.36)"></div>
</div>
<div class="L" id="dialog" style="">
<div style="left:548px;top:294px;width:389.5px;height:432px;background:#f0f0f0;border:1.2px solid #00cbca;box-sizing:border-box"></div>
<div style="left:548px;top:294px;width:389.5px;height:23.8px;background:#00cbca"></div>
<svg style="left:912px;top:300px" width="12" height="12" viewBox="0 0 12 12"><path d="M1.4 1.6l8.6 8.4M10 1.6l-8.6 8.4" stroke="#0d2b2b" stroke-width="1.1" fill="none"/></svg>
<div style="left:553.2px;top:340.7px;width:376px;height:353px;background:#fff;border:1px solid #d6d6d6;box-sizing:border-box"></div>
<div style="left:660.4px;top:326.2px;width:115.9px;height:15px;background:#f0f0f0;border:1px solid #dedede;border-bottom:none;box-sizing:border-box"></div>
<div style="left:553.2px;top:323.8px;width:107.4px;height:18.2px;background:#fff;border:1px solid #d6d6d6;border-bottom:none;box-sizing:border-box"></div>
<div style="left:595.5px;top:353.5px;width:328.7px;height:1px;background:#e4e4e4"></div>
<div style="left:593.8px;top:428.2px;width:330.4px;height:1px;background:#e4e4e4"></div>
<div style="left:606px;top:516.3px;width:318.2px;height:1px;background:#e4e4e4"></div>
<div style="left:602.8px;top:605.3px;width:321.4px;height:1px;background:#e4e4e4"></div>
<div style="left:640.2px;top:364.6px;width:100.6px;height:17px;background:#fff;border:1px solid #a9a9a9;box-sizing:border-box"></div>
<div style="left:726.8px;top:365.6px;width:13px;height:15px;background:#e3e3e3;border-left:1px solid #b5b5b5;box-sizing:border-box"></div>
<svg style="left:728.5px;top:370.5px" width="10" height="6" viewBox="0 0 10 6"><path d="M1.8 1.2l3.2 3.2 3.2-3.2" fill="none" stroke="#444" stroke-width="0.95"/></svg>
<div style="left:641.8px;top:367.6px;width:83.7px;height:10.4px;background:#0078d7"></div>
<div style="left:640.2px;top:384.4px;width:100.6px;height:16.9px;background:#fff;border:1px solid #a9a9a9;box-sizing:border-box"></div>
<div style="left:726.8px;top:385.4px;width:13px;height:14.9px;background:#e3e3e3;border-left:1px solid #b5b5b5;box-sizing:border-box"></div>
<svg style="left:728.5px;top:390.25px" width="10" height="6" viewBox="0 0 10 6"><path d="M1.8 1.2l3.2 3.2 3.2-3.2" fill="none" stroke="#444" stroke-width="0.95"/></svg>
<div style="left:748px;top:387px;width:10.3px;height:10.3px;background:#fff;border:1px solid #c6c6c6;box-sizing:border-box"></div>
<div style="left:640.2px;top:439.2px;width:46.5px;height:15.6px;background:#fff;border:1px solid #a9a9a9;box-sizing:border-box"></div>
<div style="left:673.3px;top:440.2px;width:12.4px;height:6.8px;background:#ececec;border:1px solid #c8c8c8;box-sizing:border-box"></div>
<div style="left:673.3px;top:447px;width:12.4px;height:6.8px;background:#ececec;border:1px solid #c8c8c8;box-sizing:border-box"></div>
<svg style="left:675.5px;top:441px" width="8" height="12" viewBox="0 0 8 12"><path d="M1.3 4.6h5.4L4 1.6zM1.3 7.6h5.4L4 10.6z" fill="#1a1a1a"/></svg>
<div style="left:640.2px;top:458.3px;width:46.5px;height:15.4px;background:#fff;border:1px solid #a9a9a9;box-sizing:border-box"></div>
<div style="left:673.3px;top:459.3px;width:12.4px;height:6.7px;background:#ececec;border:1px solid #c8c8c8;box-sizing:border-box"></div>
<div style="left:673.3px;top:466px;width:12.4px;height:6.7px;background:#ececec;border:1px solid #c8c8c8;box-sizing:border-box"></div>
<svg style="left:675.5px;top:460px" width="8" height="12" viewBox="0 0 8 12"><path d="M1.3 4.6h5.4L4 1.6zM1.3 7.6h5.4L4 10.6z" fill="#1a1a1a"/></svg>
<div style="left:748px;top:457.5px;width:121.7px;height:17px;background:#fff;border:1px solid #a9a9a9;box-sizing:border-box"></div>
<div style="left:855.7px;top:458.5px;width:13px;height:15px;background:#e3e3e3;border-left:1px solid #b5b5b5;box-sizing:border-box"></div>
<svg style="left:857.4px;top:463.4px" width="10" height="6" viewBox="0 0 10 6"><path d="M1.8 1.2l3.2 3.2 3.2-3.2" fill="none" stroke="#444" stroke-width="0.95"/></svg>
<div style="left:877px;top:458.3px;width:46.7px;height:15.4px;background:#fff;border:1px solid #a9a9a9;box-sizing:border-box"></div>
<div style="left:910.3px;top:459.3px;width:12.4px;height:6.7px;background:#ececec;border:1px solid #c8c8c8;box-sizing:border-box"></div>
<div style="left:910.3px;top:466px;width:12.4px;height:6.7px;background:#ececec;border:1px solid #c8c8c8;box-sizing:border-box"></div>
<svg style="left:912.5px;top:460px" width="8" height="12" viewBox="0 0 8 12"><path d="M1.3 4.6h5.4L4 1.6zM1.3 7.6h5.4L4 10.6z" fill="#1a1a1a"/></svg>
<div style="left:567.8px;top:482.2px;width:10.2px;height:10.4px;background:#fff;border:1px solid #333;box-sizing:border-box"></div>
<div style="left:640.2px;top:527.8px;width:46.5px;height:15px;background:#fff;border:1px solid #a9a9a9;box-sizing:border-box"></div>
<div style="left:673.3px;top:528.8px;width:12.4px;height:6.5px;background:#ececec;border:1px solid #c8c8c8;box-sizing:border-box"></div>
<div style="left:673.3px;top:535.3px;width:12.4px;height:6.5px;background:#ececec;border:1px solid #c8c8c8;box-sizing:border-box"></div>
<svg style="left:675.5px;top:529.3px" width="8" height="12" viewBox="0 0 8 12"><path d="M1.3 4.6h5.4L4 1.6zM1.3 7.6h5.4L4 10.6z" fill="#1a1a1a"/></svg>
<div style="left:640.2px;top:546.8px;width:46.5px;height:15.4px;background:#fff;border:1px solid #a9a9a9;box-sizing:border-box"></div>
<div style="left:673.3px;top:547.8px;width:12.4px;height:6.7px;background:#ececec;border:1px solid #c8c8c8;box-sizing:border-box"></div>
<div style="left:673.3px;top:554.5px;width:12.4px;height:6.7px;background:#ececec;border:1px solid #c8c8c8;box-sizing:border-box"></div>
<svg style="left:675.5px;top:548.5px" width="8" height="12" viewBox="0 0 8 12"><path d="M1.3 4.6h5.4L4 1.6zM1.3 7.6h5.4L4 10.6z" fill="#1a1a1a"/></svg>
<div style="left:748px;top:546px;width:121.7px;height:16.7px;background:#fff;border:1px solid #a9a9a9;box-sizing:border-box"></div>
<div style="left:855.7px;top:547px;width:13px;height:14.7px;background:#e3e3e3;border-left:1px solid #b5b5b5;box-sizing:border-box"></div>
<svg style="left:857.4px;top:551.75px" width="10" height="6" viewBox="0 0 10 6"><path d="M1.8 1.2l3.2 3.2 3.2-3.2" fill="none" stroke="#444" stroke-width="0.95"/></svg>
<div style="left:877px;top:546.8px;width:46.7px;height:15.4px;background:#fff;border:1px solid #a9a9a9;box-sizing:border-box"></div>
<div style="left:910.3px;top:547.8px;width:12.4px;height:6.7px;background:#ececec;border:1px solid #c8c8c8;box-sizing:border-box"></div>
<div style="left:910.3px;top:554.5px;width:12.4px;height:6.7px;background:#ececec;border:1px solid #c8c8c8;box-sizing:border-box"></div>
<svg style="left:912.5px;top:548.5px" width="8" height="12" viewBox="0 0 8 12"><path d="M1.3 4.6h5.4L4 1.6zM1.3 7.6h5.4L4 10.6z" fill="#1a1a1a"/></svg>
<div style="left:567.8px;top:566.4px;width:10.2px;height:10.2px;background:#fff;border:1px solid #333;box-sizing:border-box"></div>
<div style="left:567.8px;top:615.6px;width:356.2px;height:68.2px;background:#fff;border:1px solid #777;box-sizing:border-box"></div>
<div style="left:553.7px;top:702.6px;width:65px;height:17px;background:#e1e1e1;border:1px solid #adadad;box-sizing:border-box"></div>
<div style="left:673.3px;top:702.6px;width:77.2px;height:17px;background:#e1e1e1;border:1px solid #adadad;box-sizing:border-box"></div>
<div style="left:805px;top:702.6px;width:58.6px;height:17px;background:#e1e1e1;border:2px solid #0078d7;box-sizing:border-box"></div>
<div style="left:871.7px;top:702.6px;width:58.4px;height:17px;background:#e1e1e1;border:1px solid #adadad;box-sizing:border-box"></div>
<span class="t" style="left:555.00px;top:301.62px;font:400 9.3px/1 'Liberation Sans',sans-serif;color:#0d2b2b;transform:scaleX(1.0232);">Абзац</span>
<span class="t" style="left:879.90px;top:300.31px;font:700 10.5px/1 'Liberation Sans',sans-serif;color:#0d2b2b;transform:scaleX(0.6073);">?</span>
<span class="t" style="left:561.00px;top:329.32px;font:400 9.3px/1 'Liberation Sans',sans-serif;color:#1a1a1a;transform:scaleX(0.9652);">Отступы и <u>и</u>нтервалы</span>
<span class="t" style="left:665.70px;top:329.82px;font:400 9.3px/1 'Liberation Sans',sans-serif;color:#1a1a1a;">Поло<u>ж</u>ение на странице</span>
<span class="t" style="left:561.00px;top:349.62px;font:400 9.3px/1 'Liberation Sans',sans-serif;color:#1a1a1a;transform:scaleX(0.9647);">Общие</span>
<span class="t" style="left:561.00px;top:424.32px;font:400 9.3px/1 'Liberation Sans',sans-serif;color:#1a1a1a;transform:scaleX(0.9238);">Отступ</span>
<span class="t" style="left:561.00px;top:512.52px;font:400 9.3px/1 'Liberation Sans',sans-serif;color:#1a1a1a;transform:scaleX(0.9581);">Интервал</span>
<span class="t" style="left:561.00px;top:601.22px;font:400 9.3px/1 'Liberation Sans',sans-serif;color:#1a1a1a;transform:scaleX(0.9826);">Образец</span>
<span class="t" style="left:567.80px;top:368.92px;font:400 9.3px/1 'Liberation Sans',sans-serif;color:#1a1a1a;transform:scaleX(0.9776);">В<u>ы</u>равнивание:</span>
<span class="t" style="left:567.80px;top:389.12px;font:400 9.3px/1 'Liberation Sans',sans-serif;color:#1a1a1a;transform:scaleX(0.9786);"><u>У</u>ровень:</span>
<span class="t" style="left:643.40px;top:368.92px;font:400 9.3px/1 'Liberation Sans',sans-serif;color:#fff;transform:scaleX(0.9923);">По центру</span>
<span class="t" style="left:643.50px;top:389.12px;font:400 9.3px/1 'Liberation Sans',sans-serif;color:#1a1a1a;transform:scaleX(0.9895);">Основной текст</span>
<span class="t" style="left:762.00px;top:389.12px;font:400 9.3px/1 'Liberation Sans',sans-serif;color:#8a8a8a;transform:scaleX(0.9866);">Свернуты по умолчанию</span>
<span class="t" style="left:567.80px;top:442.82px;font:400 9.3px/1 'Liberation Sans',sans-serif;color:#1a1a1a;transform:scaleX(0.8890);">С<u>л</u>ева:</span>
<span class="t" style="left:567.80px;top:461.92px;font:400 9.3px/1 'Liberation Sans',sans-serif;color:#1a1a1a;transform:scaleX(0.9567);">С<u>п</u>рава:</span>
<span class="t" style="left:642.60px;top:442.82px;font:400 9.3px/1 'Liberation Sans',sans-serif;color:#1a1a1a;transform:scaleX(0.9257);">0 см</span>
<span class="t" style="left:642.60px;top:461.92px;font:400 9.3px/1 'Liberation Sans',sans-serif;color:#1a1a1a;transform:scaleX(0.9257);">0 см</span>
<span class="t" style="left:748.40px;top:442.82px;font:400 9.3px/1 'Liberation Sans',sans-serif;color:#1a1a1a;transform:scaleX(0.9736);">перва<u>я</u> строка:</span>
<span class="t" style="left:877.30px;top:442.82px;font:400 9.3px/1 'Liberation Sans',sans-serif;color:#1a1a1a;transform:scaleX(0.9375);"><u>н</u>а:</span>
<span class="t" style="left:751.30px;top:461.92px;font:400 9.3px/1 'Liberation Sans',sans-serif;color:#1a1a1a;transform:scaleX(0.9273);">(отсутствует)</span>
<span class="t" style="left:581.70px;top:483.22px;font:400 9.3px/1 'Liberation Sans',sans-serif;color:#1a1a1a;transform:scaleX(0.9616);">Зе<u>р</u>кальные отступы</span>
<span class="t" style="left:567.80px;top:531.02px;font:400 9.3px/1 'Liberation Sans',sans-serif;color:#1a1a1a;transform:scaleX(0.9295);">П<u>е</u>ред:</span>
<span class="t" style="left:567.80px;top:550.32px;font:400 9.3px/1 'Liberation Sans',sans-serif;color:#1a1a1a;transform:scaleX(0.9162);">П<u>о</u>сле:</span>
<span class="t" style="left:642.60px;top:531.02px;font:400 9.3px/1 'Liberation Sans',sans-serif;color:#1a1a1a;transform:scaleX(0.9621);">0 пт</span>
<span class="t" style="left:642.60px;top:550.32px;font:400 9.3px/1 'Liberation Sans',sans-serif;color:#1a1a1a;transform:scaleX(0.9621);">0 пт</span>
<span class="t" style="left:748.40px;top:531.02px;font:400 9.3px/1 'Liberation Sans',sans-serif;color:#1a1a1a;"><u>м</u>еждустрочный:</span>
<span class="t" style="left:877.30px;top:531.02px;font:400 9.3px/1 'Liberation Sans',sans-serif;color:#1a1a1a;"><u>з</u>начение:</span>
<span class="t" style="left:751.30px;top:550.32px;font:400 9.3px/1 'Liberation Sans',sans-serif;color:#1a1a1a;">1,5 строки</span>
<span class="t" style="left:581.70px;top:567.62px;font:400 9.3px/1 'Liberation Sans',sans-serif;color:#1a1a1a;transform:scaleX(0.9767);">Не до<u>б</u>авлять интервал между абзацами одного стиля</span>
<div style="left:568.8px;top:616.6px;width:354.2px;height:66.2px;overflow:hidden"><span class="t" style="left:41.00px;top:7.98px;font:400 6.4px/1 'Liberation Sans',sans-serif;color:#cbcbcb;-webkit-text-stroke:0;transform:scaleX(1.0757);">Предыдущий   абзац   Предыдущий   абзац   Предыдущий   абзац   Предыдущий   абзац</span></div>
<div style="left:568.8px;top:616.6px;width:354.2px;height:66.2px;overflow:hidden"><span class="t" style="left:18.90px;top:21.58px;font:400 6.4px/1 'Liberation Sans',sans-serif;color:#cbcbcb;-webkit-text-stroke:0;transform:scaleX(1.0928);">Предыдущий абзац Предыдущий абзац Предыдущий абзац Предыдущий абзац Предыдущий</span></div>
<div style="left:568.8px;top:616.6px;width:354.2px;height:66.2px;overflow:hidden"><span class="t" style="left:18.90px;top:34.98px;font:400 6.4px/1 'Liberation Sans',sans-serif;color:#cbcbcb;-webkit-text-stroke:0;transform:scaleX(1.0447);">абзац Предыдущий абзац Предыдущий абзац</span></div>
<div style="left:568.8px;top:616.6px;width:354.2px;height:66.2px;overflow:hidden"><span class="t" style="left:123.10px;top:48.78px;font:400 6.4px/1 'Liberation Sans',sans-serif;color:#333;-webkit-text-stroke:0;transform:scaleX(0.9500);">ПАСПОРТ ПРОЕКТНОЙ РАБОТЫ</span></div>
<div style="left:568.8px;top:616.6px;width:354.2px;height:66.2px;overflow:hidden"><span class="t" style="left:41.00px;top:63.28px;font:400 6.4px/1 'Liberation Sans',sans-serif;color:#cbcbcb;-webkit-text-stroke:0;transform:scaleX(1.0779);">Следующий абзац Следующий абзац Следующий абзац Следующий абзац Следующий</span></div>
<span class="t" style="left:560.20px;top:707.02px;font:400 9.3px/1 'Liberation Sans',sans-serif;color:#1a1a1a;transform:scaleX(0.9448);"><u>Т</u>абуляция...</span>
<span class="t" style="left:680.20px;top:707.02px;font:400 9.3px/1 'Liberation Sans',sans-serif;color:#1a1a1a;transform:scaleX(0.9938);">По умол<u>ч</u>анию</span>
<span class="t" style="left:828.00px;top:707.02px;font:400 9.3px/1 'Liberation Sans',sans-serif;color:#1a1a1a;transform:scaleX(0.9244);">ОК</span>
<span class="t" style="left:884.30px;top:707.02px;font:400 9.3px/1 'Liberation Sans',sans-serif;color:#1a1a1a;transform:scaleX(0.9503);">Отмена</span>
</div>
<div class="L" id="status" style="">
<div style="left:0px;top:787px;width:1300px;height:18px;background:#666;border-top:1.5px solid #4c4c4c;box-sizing:border-box"></div>
<div style="left:0px;top:803.5px;width:1300px;height:1.5px;background:#5a5a5a"></div>
<div style="left:1289px;top:788.5px;width:11px;height:16.5px;background:#4a4a4a"></div>
<svg style="left:122px;top:789px" width="16" height="12" viewBox="0 0 16 12"><path d="M1.5 1.5h4.3v8H1.5zM5.8 1.5h3M5.8 9.5h2" fill="none" stroke="#eee" stroke-width="1"/><path d="M8.3 7.2l1.6 1.8 2.6-3.4" fill="none" stroke="#eee" stroke-width="1.1"/><path d="M9.6 3.2a1.6 1.6 0 1 1 1.5 1.2" fill="none" stroke="#eee" stroke-width="0.9"/></svg>
<svg style="left:1267px;top:789px" width="14" height="12" viewBox="0 0 14 12"><path d="M1.5 2.2h4.3l1.2.9 1.2-.9h4.3v7.6H8.2l-1.2.9-1.2-.9H1.5z" fill="#d8d8d8"/><path d="M7 3.1v7.6" stroke="#666" stroke-width="0.9"/></svg>
<svg style="left:1293px;top:790px" width="8" height="11" viewBox="0 0 8 11"><path d="M1 .8h8v9.4H1z" fill="none" stroke="#ddd" stroke-width="1"/></svg>
<span class="t" style="left:0.00px;top:789.97px;font:400 9.6px/1 'Liberation Sans',sans-serif;color:#f2f2f2;transform:scaleX(0.8914);">ца 1 из 1</span>
<span class="t" style="left:51.00px;top:789.97px;font:400 9.6px/1 'Liberation Sans',sans-serif;color:#f2f2f2;transform:scaleX(0.9184);">Слово 3 из 97</span>
<span class="t" style="left:148.50px;top:789.97px;font:400 9.6px/1 'Liberation Sans',sans-serif;color:#f2f2f2;transform:scaleX(0.9728);">русский</span>
</div>
<div class="L" id="anno" style="">
<svg style="left:0;top:0" width="1300" height="805" viewBox="0 0 1300 805"><rect x="126.8" y="29.3" width="298.4" height="74" rx="2.5" ry="2.5" fill="none" stroke="#ea3b2e" stroke-width="2.6"/><rect x="552" y="418.7" width="379.5" height="179.2" rx="2.5" ry="2.5" fill="none" stroke="#a855ad" stroke-width="2.2"/><path d="M268.4 110.2 L250.5 124.6 Q249.8 126.4 251.8 126.6 L260 128.6 L240.2 279.5 Q241.2 281.8 242.6 279.8 L270 131.4 L277.5 130.2 Q279.4 129.4 278.3 127.8 Z" fill="#ff3b2f"/><path d="M522.6 97.6 L514.3 116.4 Q514.2 118.2 516 117.8 L524.6 118.6 L580.6 287.6 Q581.6 288.8 582.4 287.4 L534.6 115 L540.4 113.2 Q541.8 112.2 540.6 111 Z" fill="#1b75bb"/><path d="M940.6 499.2 L955.6 486.4 Q957.4 485.6 957.6 487.6 L957.8 495 L1068 501.6 Q1070.4 503.6 1068 505.6 L957.4 506.2 L957 512.6 Q956.6 514.6 954.8 513.6 Z" fill="#b05cb5"/><text x="72" y="322.8" font-family="'Liberation Sans',sans-serif" font-size="35" fill="#e60000" stroke="#fff" stroke-width="7.6" stroke-linejoin="round" paint-order="stroke" textLength="338.6" lengthAdjust="spacingAndGlyphs">Выделить заголовок</text><text x="137.4" y="365.4" font-family="'Liberation Sans',sans-serif" font-size="35" fill="#e60000" stroke="#fff" stroke-width="7.6" stroke-linejoin="round" paint-order="stroke" textLength="205.2" lengthAdjust="spacingAndGlyphs">и применить</text><text x="105.5" y="409.6" font-family="'Liberation Sans',sans-serif" font-size="35" fill="#e60000" stroke="#fff" stroke-width="7.6" stroke-linejoin="round" paint-order="stroke" textLength="281.8" lengthAdjust="spacingAndGlyphs">форматирование</text><text x="1065" y="435.7" font-family="'Liberation Sans',sans-serif" font-size="43" fill="#8c0a96" stroke="#fff" stroke-width="9" stroke-linejoin="round" paint-order="stroke" textLength="157" lengthAdjust="spacingAndGlyphs">Указать</text><text x="1061.4" y="492.8" font-family="'Liberation Sans',sans-serif" font-size="43" fill="#8c0a96" stroke="#fff" stroke-width="9" stroke-linejoin="round" paint-order="stroke" textLength="162" lengthAdjust="spacingAndGlyphs">отступы</text><text x="1012.9" y="543.3" font-family="'Liberation Sans',sans-serif" font-size="43" fill="#8c0a96" stroke="#fff" stroke-width="9" stroke-linejoin="round" paint-order="stroke" textLength="257.1" lengthAdjust="spacingAndGlyphs">и интервалы</text><text x="1017.7" y="597.8" font-family="'Liberation Sans',sans-serif" font-size="43" fill="#8c0a96" stroke="#fff" stroke-width="9" stroke-linejoin="round" paint-order="stroke" textLength="266.6" lengthAdjust="spacingAndGlyphs">как показано</text><g fill="#1c00ff"><rect x="818" y="107" width="132" height="22" rx="9"/><rect x="818" y="93" width="41" height="43" rx="9"/><circle cx="892" cy="103.8" r="5"/><circle cx="908.5" cy="105" r="4.6"/><circle cx="927.7" cy="97" r="4.6"/><circle cx="867" cy="132.3" r="4.6"/><circle cx="889" cy="130.8" r="4.6"/><circle cx="899" cy="132.3" r="4.8"/><circle cx="940.8" cy="132" r="4.8"/><circle cx="853" cy="100" r="6"/><circle cx="850" cy="131" r="6"/></g><path d="M825 102l8-1.4v27l-8 1z" fill="#9fe6ff"/><path d="M829 101.5l14-1.5 5 5v22.5l-19 1.5z" fill="#fff"/><path d="M832 107l11-1.2M832 110.5l12-1.2M832 114l12-1.2M832 117.5l9-1" stroke="#28c3f0" stroke-width="1.5"/><rect x="835" y="119" width="13" height="10" fill="#dff6ff"/><path d="M835 122.3h13M835 125.6h13M841.5 119v10" stroke="#28c3f0" stroke-width="1"/><text x="851.5" y="123" font-family="'Liberation Serif',serif" font-weight="700" font-size="14.4" fill="#fff" textLength="94" lengthAdjust="spacingAndGlyphs">WorKProekT</text></svg>
</div>
</body></html>
